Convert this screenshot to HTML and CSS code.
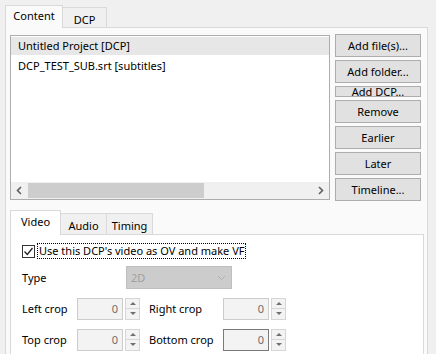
FILE: index.html
```html
<!DOCTYPE html>
<html>

<head>
    <title>Content</title>
    <link rel="stylesheet" href="styles.css">
</head>

<body>
    <!-- Top tabs -->
    <div class="tabbar">
        <div class="tab selected">Content</div>
        <div class="tab">DCP</div>
    </div>

    <div class="pane">
        <div class="content-row">
            <div class="list">
                <div class="list-items">
                    <div class="item current">Untitled Project [DCP]</div>
                    <div class="item">DCP_TEST_SUB.srt [subtitles]</div>
                </div>
                <div class="hscroll">
                    <div class="sb-arrow">
                        <svg width="7" height="9" viewBox="0 0 7 9"><path d="M5 1 L1.5 4.5 L5 8" fill="none" stroke="#606060" stroke-width="1.6"/></svg>
                    </div>
                    <div class="sb-track"><div class="sb-thumb"></div></div>
                    <div class="sb-arrow">
                        <svg width="7" height="9" viewBox="0 0 7 9"><path d="M2 1 L5.5 4.5 L2 8" fill="none" stroke="#606060" stroke-width="1.6"/></svg>
                    </div>
                </div>
            </div>

            <div class="buttons">
                <button class="btn">Add file(s)...</button>
                <button class="btn">Add folder...</button>
                <button class="btn squashed"><span>Add DCP...</span></button>
                <button class="btn">Remove</button>
                <button class="btn">Earlier</button>
                <button class="btn">Later</button>
                <button class="btn">Timeline...</button>
            </div>
        </div>

        <!-- Sub tabs -->
        <div class="subtabbar">
            <div class="subtab selected">Video</div>
            <div class="subtab">Audio</div>
            <div class="subtab">Timing</div>
        </div>

        <div class="subpane">
            <div class="check-row">
                <span class="checkbox">
                    <svg width="11" height="11" viewBox="0 0 11 11"><path d="M1.5 5.5 L4.3 8.5 L9.5 2" fill="none" stroke="#222" stroke-width="1.3"/></svg>
                </span>
                <span class="check-label">Use this DCP's video as OV and make VF</span>
            </div>

            <div class="field-row">
                <span class="label type-label">Type</span>
                <div class="combo">
                    <span>2D</span>
                    <svg width="9" height="6" viewBox="0 0 9 6"><path d="M1 1 L4.5 4.5 L8 1" fill="none" stroke="#b0b0b0" stroke-width="1"/></svg>
                </div>
            </div>

            <div class="field-row">
                <span class="label crop-label">Left crop</span>
                <div class="spin"><span class="spin-box">0</span><span class="spin-arrows"><span class="up"></span><span class="down"></span></span></div>
                <span class="label crop-label2">Right crop</span>
                <div class="spin"><span class="spin-box">0</span><span class="spin-arrows"><span class="up"></span><span class="down"></span></span></div>
            </div>

            <div class="field-row">
                <span class="label crop-label">Top crop</span>
                <div class="spin"><span class="spin-box">0</span><span class="spin-arrows"><span class="up"></span><span class="down"></span></span></div>
                <span class="label crop-label2">Bottom crop</span>
                <div class="spin"><span class="spin-box hover">0</span><span class="spin-arrows"><span class="up"></span><span class="down"></span></span></div>
            </div>
        </div>
    </div>
</body>

</html>
```

FILE: styles.css
```css
body {
    margin: 0;
    background-color: #f0f0f0;
    font-family: 'Noto Sans', 'Open Sans', sans-serif;
    font-size: 11px;
    color: #000;
    overflow: hidden;
    height: 354px;
}

/* Top tab bar */
.tabbar {
    display: flex;
    align-items: flex-end;
    padding: 5px 0 0 5px;
    height: 22px;
}

.tab {
    height: 20px;
    line-height: 20px;
    width: 44px;
    box-sizing: border-box;
    border: 1px solid #d9d9d9;
    border-bottom: none;
    border-left: none;
    background-color: #f0f0f0;
    text-align: center;
    padding-top: 2px;
}

.tab.selected {
    height: 23px;
    width: 58px;
    border-left: 1px solid #d9d9d9;
    background-color: #fafafa;
    margin-bottom: -1px;
    position: relative;
    z-index: 1;
    padding-top: 0;
}

.pane {
    margin-left: 5px;
    width: 423px;
    box-sizing: border-box;
    border: 1px solid #d9d9d9;
    border-bottom: none;
    background-color: #fafafa;
    padding: 7px 4px 0 4px;
    height: 327px;
}

.content-row {
    display: flex;
    gap: 5px;
}

/* Content list */
.list {
    width: 320px;
    height: 165px;
    box-sizing: border-box;
    border: 1px solid #adadad;
    background-color: #fff;
    display: flex;
    flex-direction: column;
}

.list-items {
    flex: 1;
    padding-top: 1px;
}

.item {
    height: 19px;
    line-height: 19px;
    padding-left: 7px;
    white-space: nowrap;
}

.item.current {
    background-color: #e7e7e7;
    height: 18px;
    line-height: 18px;
    margin-bottom: 1px;
}

.hscroll {
    display: flex;
    height: 17px;
    background-color: #f0f0f0;
}

.sb-arrow {
    width: 17px;
    display: flex;
    align-items: center;
    justify-content: center;
}

.sb-track {
    flex: 1;
    padding: 1px 0;
}

.sb-thumb {
    width: 176px;
    height: 15px;
    background-color: #cdcdcd;
}

/* Right buttons */
.buttons {
    display: flex;
    flex-direction: column;
    gap: 3px;
    width: 86px;
    margin-top: -1px;
}

.btn {
    height: 23px;
    box-sizing: border-box;
    border: 1px solid #adadad;
    background-color: #e1e1e1;
    font-family: 'Noto Sans', 'Open Sans', sans-serif;
    font-size: 11px;
    color: #000;
    padding: 0;
    margin: 0;
    line-height: 20px;
}

.btn.squashed {
    height: 11px;
    overflow: hidden;
    display: flex;
    justify-content: center;
    align-items: center;
}

.btn.squashed span {
    line-height: 16px;
    height: 16px;
    flex-shrink: 0;
}

/* Sub tabs */
.subtabbar {
    display: flex;
    align-items: flex-end;
    margin-top: 9px;
    height: 24px;
}

.subtab {
    height: 21px;
    box-sizing: border-box;
    border: 1px solid #d9d9d9;
    border-bottom: none;
    border-left: none;
    background-color: #f0f0f0;
    text-align: center;
    line-height: 21px;
    padding-top: 1px;
    width: 46px;
}

.subtab.selected {
    height: 25px;
    width: 51px;
    border-left: 1px solid #d9d9d9;
    background-color: #fff;
    margin-bottom: -1px;
    position: relative;
    z-index: 1;
    padding-top: 0;
}

.subpane {
    width: 414px;
    box-sizing: border-box;
    border: 1px solid #d9d9d9;
    border-bottom: none;
    background-color: #fff;
    padding: 8px 11px 0 11px;
    height: 121px;
    display: flex;
    flex-direction: column;
    gap: 8px;
}

.check-row {
    display: flex;
    align-items: center;
    height: 16px;
    margin-bottom: -1px;
}

.checkbox {
    width: 13px;
    height: 13px;
    box-sizing: border-box;
    border: 1px solid #333;
    display: flex;
    align-items: center;
    justify-content: center;
    margin-right: 2px;
}

.check-label {
    border: 1px dotted #000;
    padding: 0 1px;
    line-height: 14px;
    white-space: nowrap;
}

.field-row {
    display: flex;
    align-items: center;
    height: 23px;
    flex-shrink: 0;
}

.label {
    white-space: nowrap;
}

.type-label {
    width: 104px;
}

.crop-label {
    width: 55px;
}

.crop-label2 {
    width: 74px;
    margin-left: 9px;
}

.combo {
    width: 106px;
    height: 23px;
    box-sizing: border-box;
    border: 1px solid #bfbfbf;
    background-color: #cccccc;
    color: #a0a0a0;
    display: flex;
    align-items: center;
    justify-content: space-between;
    padding: 0 5px 0 4px;
}

/* Spin boxes */
.spin {
    display: flex;
    align-items: center;
    gap: 2px;
}

.spin-box {
    width: 46px;
    height: 22px;
    box-sizing: border-box;
    border: 1px solid #cccccc;
    background-color: #f3f3f3;
    color: #6d6d6d;
    text-align: right;
    padding-right: 4px;
    line-height: 20px;
}

.spin-box.hover {
    border-color: #7a7a7a;
}

.spin-arrows {
    display: flex;
    flex-direction: column;
    width: 15px;
    height: 22px;
}

.spin-arrows .up,
.spin-arrows .down {
    flex: 1;
    box-sizing: border-box;
    border: 1px solid #d6d6d6;
    background-color: #f3f3f3;
    display: flex;
    align-items: center;
    justify-content: center;
}

.spin-arrows .down {
    border-top: none;
}

.spin-arrows .up::after {
    content: '';
    border-left: 3px solid transparent;
    border-right: 3px solid transparent;
    border-bottom: 3px solid #707070;
}

.spin-arrows .down::after {
    content: '';
    border-left: 3px solid transparent;
    border-right: 3px solid transparent;
    border-top: 3px solid #707070;
}
```
